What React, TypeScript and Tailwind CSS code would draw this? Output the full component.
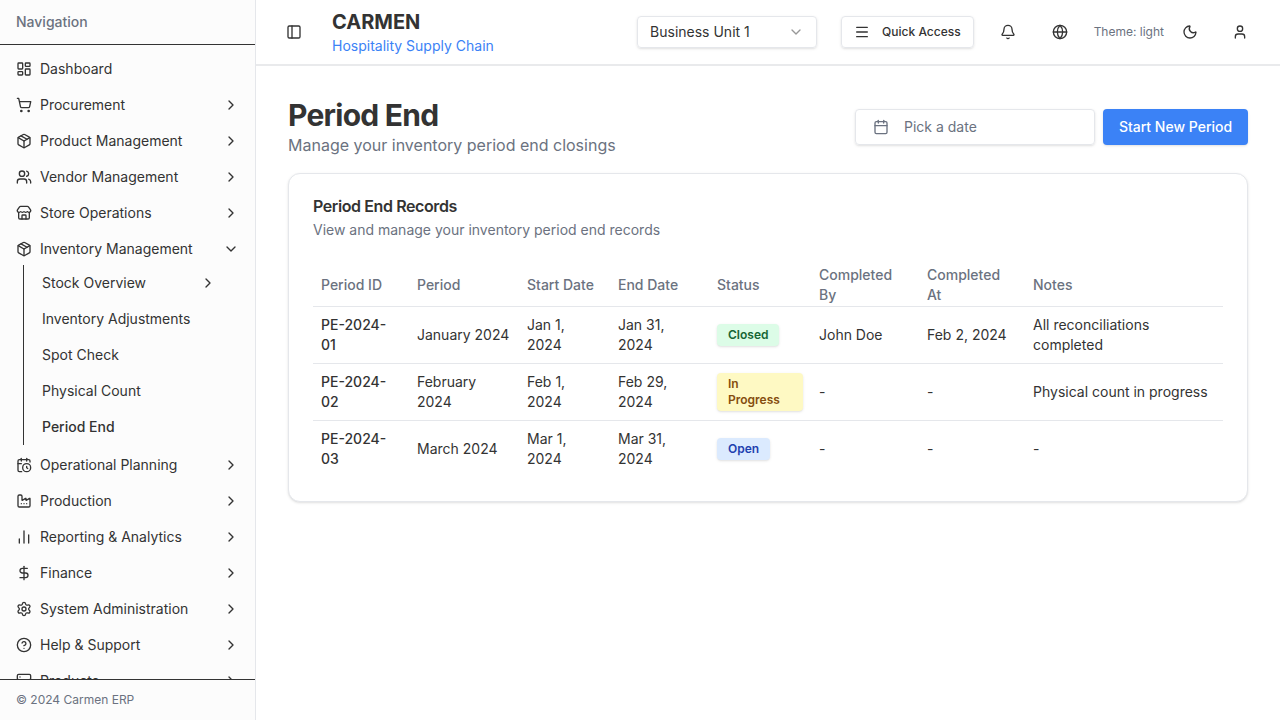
import { FC, ReactNode } from 'react'
import {
  Bell,
  Calendar,
  CalendarClock,
  ChartNoAxesColumn,
  ChevronDown,
  ChevronRight,
  CircleHelp,
  DollarSign,
  Factory,
  Globe,
  LayoutDashboard,
  Menu,
  Moon,
  Package,
  PanelLeft,
  Server,
  Settings,
  ShoppingCart,
  Store,
  User,
  Users,
} from 'lucide-react'

const font = 'font-["Inter",sans-serif]'

interface NavItemProps {
  icon: ReactNode
  label: string
  open?: boolean
}

const NavItem: FC<NavItemProps> = ({ icon, label, open }) => (
  <div className="h-9 shrink-0 flex items-center px-4 text-sm text-[#333333]">
    <span className="w-4 h-4 mr-2 shrink-0 flex items-center justify-center">{icon}</span>
    <span className="flex-1 truncate">{label}</span>
    {open ? <ChevronDown className="w-4 h-4" /> : label !== 'Dashboard' && <ChevronRight className="w-4 h-4" />}
  </div>
)

const subItems = ['Stock Overview', 'Inventory Adjustments', 'Spot Check', 'Physical Count', 'Period End']

const rows = [
  {
    id: 'PE-2024-01',
    period: 'January 2024',
    start: 'Jan 1, 2024',
    end: 'Jan 31, 2024',
    status: 'Closed',
    badge: 'bg-[#dcfce7] text-[#166534]',
    by: 'John Doe',
    at: 'Feb 2, 2024',
    notes: 'All reconciliations completed',
  },
  {
    id: 'PE-2024-02',
    period: 'February 2024',
    start: 'Feb 1, 2024',
    end: 'Feb 29, 2024',
    status: 'In Progress',
    badge: 'bg-[#fef9c3] text-[#854d0e]',
    by: '-',
    at: '-',
    notes: 'Physical count in progress',
  },
  {
    id: 'PE-2024-03',
    period: 'March 2024',
    start: 'Mar 1, 2024',
    end: 'Mar 31, 2024',
    status: 'Open',
    badge: 'bg-[#dbeafe] text-[#1e40af]',
    by: '-',
    at: '-',
    notes: '-',
  },
]

const Sidebar: FC = () => (
  <aside className="w-[256px] h-full shrink-0 flex flex-col bg-[#fcfcfc] border-r border-[#e5e7eb]">
    <div className="h-[45px] shrink-0 flex items-center px-4 text-sm font-medium text-[#6b7280] border-b border-[#333333]">
      Navigation
    </div>
    <nav className="flex-1 min-h-0 overflow-hidden pt-[6px] flex flex-col">
      <NavItem icon={<LayoutDashboard className="w-4 h-4" />} label="Dashboard" />
      <NavItem icon={<ShoppingCart className="w-4 h-4" />} label="Procurement" />
      <NavItem icon={<Package className="w-4 h-4" />} label="Product Management" />
      <NavItem icon={<Users className="w-4 h-4" />} label="Vendor Management" />
      <NavItem icon={<Store className="w-4 h-4" />} label="Store Operations" />
      <NavItem icon={<Package className="w-4 h-4" />} label="Inventory Management" open />
      <div className="ml-[23px] w-[193px] border-l border-[#333333] flex flex-col shrink-0 -mt-[2px] mb-[2px]">
        {subItems.map((s) => (
          <div
            key={s}
            className={`h-9 shrink-0 flex items-center pl-[18px] text-sm text-[#333333] ${
              s === 'Period End' ? 'font-medium' : ''
            }`}
          >
            <span className="flex-1">{s}</span>
            {s === 'Stock Overview' && <ChevronRight className="w-4 h-4" />}
          </div>
        ))}
      </div>
      <NavItem icon={<CalendarClock className="w-4 h-4" />} label="Operational Planning" />
      <NavItem icon={<Factory className="w-4 h-4" />} label="Production" />
      <NavItem icon={<ChartNoAxesColumn className="w-4 h-4" />} label="Reporting & Analytics" />
      <NavItem icon={<DollarSign className="w-4 h-4" />} label="Finance" />
      <NavItem icon={<Settings className="w-4 h-4" />} label="System Administration" />
      <NavItem icon={<CircleHelp className="w-4 h-4" />} label="Help & Support" />
      <NavItem icon={<Server className="w-4 h-4" />} label="Products" />
    </nav>
    <div className="h-[41px] shrink-0 flex items-center px-4 text-xs text-[#6b7280] border-t border-[#333333]">
      © 2024 Carmen ERP
    </div>
  </aside>
)

const Header: FC = () => (
  <header className="h-[66px] shrink-0 flex items-center bg-white border-b-2 border-[#e9eaec] pl-[30px] pr-[32px] text-[#333333]">
    <PanelLeft className="w-4 h-4 mr-[30px]" />
    <div className="flex flex-col">
      <span className="text-xl font-bold leading-7">CARMEN</span>
      <span className="text-sm leading-5 text-[#3b82f6]">Hospitality Supply Chain</span>
    </div>
    <div className="ml-auto w-[180px] h-8 flex items-center justify-between px-3 rounded border border-[#e5e7eb] shadow-sm text-sm">
      Business Unit 1
      <ChevronDown className="w-4 h-4 opacity-50" />
    </div>
    <div className="ml-6 h-8 flex items-center px-3 rounded border border-[#e5e7eb] shadow-sm text-xs font-medium">
      <Menu className="w-4 h-4 mr-3" />
      Quick Access
    </div>
    <Bell className="w-4 h-4 ml-[26px]" />
    <Globe className="w-4 h-4 ml-9" />
    <span className="ml-[26px] text-xs text-[#6b7280]">Theme: light</span>
    <Moon className="w-4 h-4 ml-[18px]" />
    <User className="w-4 h-4 ml-[34px]" />
  </header>
)

const th = 'h-10 px-2 pb-px text-left align-middle text-sm font-medium text-[#6b7280] leading-5'
const td = 'px-2 py-2 align-middle text-sm leading-5 text-[#333333]'

const App: FC = () => (
  <div className={`w-[1280px] h-[720px] overflow-hidden flex bg-white ${font}`}>
    <Sidebar />
    <div className="flex-1 min-w-0 flex flex-col">
      <Header />
      <main className="flex-1 px-8 pt-[31px]">
        <div className="flex items-center justify-between">
          <div>
            <h1 className="text-3xl font-bold tracking-tight leading-9 text-[#333333]">Period End</h1>
            <p className="text-base leading-6 text-[#6b7280]">Manage your inventory period end closings</p>
          </div>
          <div className="flex items-center gap-2">
            <div className="w-[240px] h-9 flex items-center pl-[17px] rounded border border-[#e5e7eb] shadow-sm text-sm text-[#6b7280]">
              <Calendar className="w-4 h-4 mr-[15px]" />
              Pick a date
            </div>
            <button className="w-[145px] h-9 rounded bg-[#3b82f6] text-white text-sm font-medium shadow-sm">
              Start New Period
            </button>
          </div>
        </div>
        <section className="mt-4 rounded-xl border border-[#e5e7eb] shadow-sm bg-white px-6 pt-6 pb-6">
          <h2 className="text-base font-semibold leading-4 tracking-tight text-[#333333]">Period End Records</h2>
          <p className="mt-[6px] text-sm leading-5 text-[#6b7280]">View and manage your inventory period end records</p>
          <table className="mt-[25px] w-full border-collapse">
            <thead>
              <tr className="border-b border-[#e5e7eb]">
                <th className={`${th} w-[96px]`}>Period ID</th>
                <th className={`${th} w-[110px]`}>Period</th>
                <th className={`${th} w-[91px]`}>Start Date</th>
                <th className={`${th} w-[99px]`}>End Date</th>
                <th className={`${th} w-[102px]`}>Status</th>
                <th className={`${th} w-[108px]`}>Completed By</th>
                <th className={`${th} w-[106px]`}>Completed At</th>
                <th className={th}>Notes</th>
              </tr>
            </thead>
            <tbody>
              {rows.map((r, i) => (
                <tr key={r.id} className={i < rows.length - 1 ? 'border-b border-[#e5e7eb]' : ''}>
                  <td className={`${td} font-medium`}>{r.id}</td>
                  <td className={td}>{r.period}</td>
                  <td className={td}>{r.start}</td>
                  <td className={td}>{r.end}</td>
                  <td className={td}>
                    <span className={`inline-block align-middle rounded px-[11px] py-[3px] text-xs leading-4 font-semibold shadow-sm ${r.badge}`}>
                      {r.status}
                    </span>
                  </td>
                  <td className={td}>{r.by}</td>
                  <td className={td}>{r.at}</td>
                  <td className={td}>{r.notes}</td>
                </tr>
              ))}
            </tbody>
          </table>
        </section>
      </main>
    </div>
  </div>
)

export default App
